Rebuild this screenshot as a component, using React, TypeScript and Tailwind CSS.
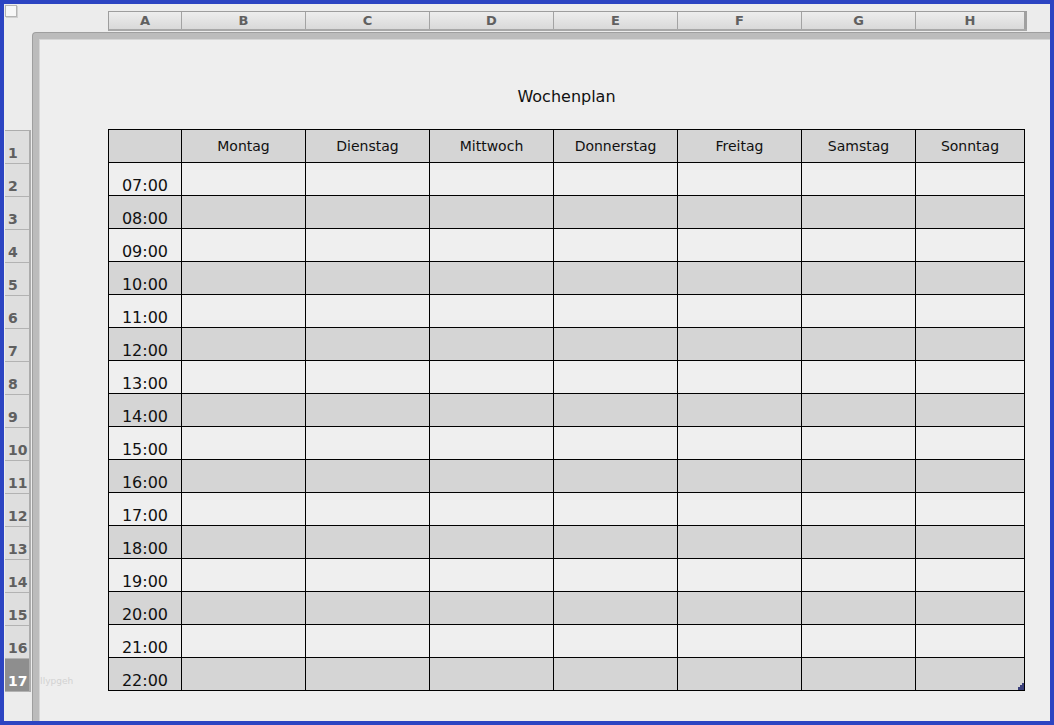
const columns = [
  { key: "A", title: "" },
  { key: "B", title: "Montag" },
  { key: "C", title: "Dienstag" },
  { key: "D", title: "Mittwoch" },
  { key: "E", title: "Donnerstag" },
  { key: "F", title: "Freitag" },
  { key: "G", title: "Samstag" },
  { key: "H", title: "Sonntag" },
];

const hours = [
  "07:00", "08:00", "09:00", "10:00", "11:00", "12:00", "13:00", "14:00",
  "15:00", "16:00", "17:00", "18:00", "19:00", "20:00", "21:00", "22:00",
];

const gridCols = "grid grid-cols-[73px_124px_124px_124px_124px_124px_114px_109px]";

const ResizeHandle = () => (
  <svg width="7" height="7" viewBox="0 0 7 7" className="absolute right-0 bottom-0">
    <rect x="5" y="0" width="2" height="7" fill="#3a3f7a" />
    <rect x="3" y="2" width="2" height="5" fill="#3a3f7a" />
    <rect x="1" y="4" width="2" height="3" fill="#3a3f7a" />
  </svg>
);

const App = () => {
  return (
    <div
      className="w-[1054px] h-[725px] border-4 border-[#2c44c2] bg-[#ececec] grid grid-cols-[28px_1fr] grid-rows-[28px_1fr] overflow-hidden"
      style={{ fontFamily: '"DejaVu Sans", "Liberation Sans", sans-serif' }}
    >
      {/* corner */}
      <div className="pl-px pt-px">
        <div className="w-[12px] h-[12px] border border-[#b4b4b4] bg-[#f7f7f7] shadow-[1px_1px_0_#d0d0d0]"></div>
      </div>

      {/* column letters */}
      <div className="pl-[76px] pt-[7px]">
        <div className={`${gridCols} h-[20px] border-t border-b-2 border-l border-[#9d9d9d] border-b-[#a8a8a8] bg-gradient-to-b from-[#ededed] to-[#d9d9d9] w-[919px]`}>
          {columns.map((col, index) => (
            <div
              key={col.key}
              className={`${index === columns.length - 1 ? "border-r-[3px] border-[#a0a0a0] w-[111px]" : "border-r border-[#a3a3a3]"} flex items-center justify-center text-[13px] font-bold text-[#606060] leading-none`}
            >
              {col.key}
            </div>
          ))}
        </div>
      </div>

      {/* row numbers */}
      <div className="pl-px pt-[98px]">
        <div className="w-[26px] border-t border-r-2 border-[#acacac]">
          {Array.from({ length: 17 }).map((_, index) => (
            <div
              key={index}
              className={`${index === 16 ? "bg-[#8e8e8e] text-white" : "bg-[#dedede] text-[#606060]"} h-[33px] border-b border-[#b2b2b2] flex items-end pl-[3px] pb-[2px] text-[14px] font-bold leading-[16px]`}
            >
              {index + 1}
            </div>
          ))}
        </div>
      </div>

      {/* page */}
      <div className="bg-[#9f9f9f] pl-px pt-px rounded-tl-[4px]">
        <div className="h-full bg-[#bcbcbc] pl-[6px] pt-[6px] rounded-tl-[3px]">
          <div className="h-full bg-[#eeeeee] border-t border-l border-[#d6d6d6] pt-[47px]">
            <div className="ml-[68px] w-[917px] text-center text-[16px] leading-[19px] text-[#111]">
              Wochenplan
            </div>
            <div className="flex mt-[23px]">
              <div className="w-[68px] flex items-end pb-[5px]">
                <span className="text-[9px] text-[#d2d2d2] leading-none">Ilypgeh</span>
              </div>
              <div className={`${gridCols} border-t border-l border-black w-[917px]`}>
                {columns.map((col) => (
                  <div
                    key={col.key}
                    className="h-[33px] bg-[#d5d5d5] border-r border-b border-black flex items-center justify-center text-[14px] text-[#111]"
                  >
                    {col.title}
                  </div>
                ))}
                {hours.map((hour, rowIndex) =>
                  columns.map((col, colIndex) => (
                    <div
                      key={`${hour}-${col.key}`}
                      className={`${rowIndex % 2 === 1 ? "bg-[#d5d5d5]" : "bg-[#efefef]"} relative h-[33px] border-r border-b border-black flex items-end justify-center text-[16px] leading-[19px] text-[#111]`}
                    >
                      {colIndex === 0 ? hour : ""}
                      {rowIndex === hours.length - 1 && colIndex === columns.length - 1 && <ResizeHandle />}
                    </div>
                  ))
                )}
              </div>
            </div>
          </div>
        </div>
      </div>
    </div>
  );
};

export default App;
